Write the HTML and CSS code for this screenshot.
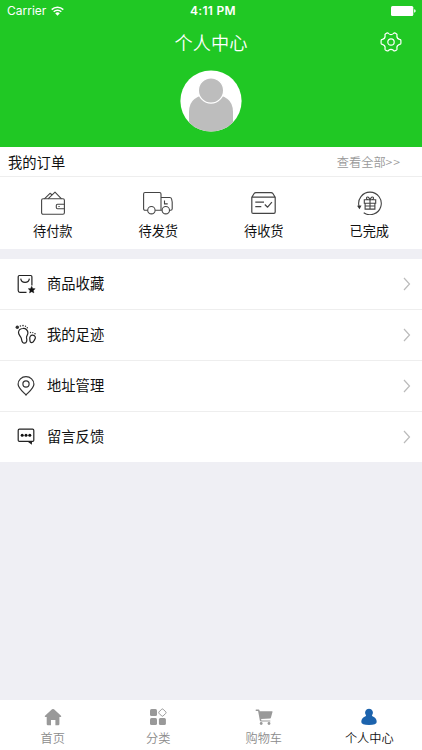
FILE: index.html
```html
<!DOCTYPE html>
<html lang="zh-CN">
<head>
<meta charset="utf-8">
<title>个人中心</title>
<link rel="stylesheet" href="styles.css">
</head>
<body>
<div class="app">
  <header class="header">
    <div class="status">
      <div class="carrier"><span>Carrier</span>
        <svg class="wifi" width="13" height="10" viewBox="0 0 13 10"><g fill="none" stroke="#fff" stroke-width="1.5"><path d="M.7 3.6a8.3 8.3 0 0 1 11.6 0"/><path d="M2.7 5.8a5.5 5.5 0 0 1 7.6 0"/></g><path d="M4.2 7.3a3.4 3.4 0 0 1 4.6 0L6.5 9.7z" fill="#fff"/></svg>
      </div>
      <span class="time">4:11 PM</span>
      <svg class="battery" width="25" height="10" viewBox="0 0 25 10" fill="#fff"><rect width="22.3" height="10" rx="1.5"/><path d="M23.1 3.3q1.6.3 1.6 1.7t-1.6 1.7z"/></svg>
    </div>
    <div class="nav">
      <h1>个人中心</h1>
      <svg class="gear" width="22" height="20" viewBox="0 0 22 20" fill="none" stroke="#fff" stroke-width="1.2" stroke-linejoin="round"><path d="M8.6 1.6Q11 3.6 13.4 1.6Q14.2.6 15.2 1.1L16.6 2Q17.3 2.5 16.9 3.6Q16.6 6.6 19.6 7.4Q20.9 7.6 20.9 8.6V11.2Q20.9 12.2 19.6 12.4Q16.6 13.4 16.9 16.3Q17.3 17.4 16.6 17.9L15.2 18.8Q14.2 19.3 13.4 18.3Q11 16.3 8.6 18.3Q7.8 19.3 6.8 18.8L5.4 17.9Q4.7 17.4 5.1 16.3Q5.4 13.4 2.4 12.4Q1.1 12.2 1.1 11.2V8.6Q1.1 7.6 2.4 7.4Q5.4 6.6 5.1 3.6Q4.7 2.5 5.4 2L6.8 1.1Q7.8.6 8.6 1.6Z"/><circle cx="11" cy="10" r="3.2"/></svg>
    </div>
    <svg class="avatar" width="62" height="62" viewBox="0 0 62 62"><defs><clipPath id="disc"><circle cx="31" cy="31" r="30.6"/></clipPath></defs><circle cx="31" cy="31" r="30.6" fill="#fff"/><g clip-path="url(#disc)"><path d="M9 62V42Q9 24.500 31 24.500T53 42V62z" fill="#bdbdbd"/><circle cx="31" cy="20.500" r="12.600" fill="#bdbdbd" stroke="#fff" stroke-width="1.200"/></g></svg>
  </header>

  <section class="orders">
    <div class="orders-head"><h2>我的订单</h2><a>查看全部<span class="more">&gt;&gt;</span></a></div>
    <div class="order-grid">
      <div class="order">
        <svg width="24" height="24" viewBox="0 0 24 24" fill="none" stroke="#444" stroke-width="1.1" stroke-linejoin="round"><rect x=".6" y="7.8" width="22.8" height="15.400" rx="1.500"/><path d="M3.400 7.800L9 2.300l2 1.500M7 7.800L14 1.200l6.500 6.600M23.400 13.200h-6.900q-1.200 0-1.200 1.200v2.200q0 1.200 1.200 1.200h6.900M17.400 15.500h1.300"/></svg>
        <span>待付款</span>
      </div>
      <div class="order">
        <svg width="30" height="24" viewBox="0 0 30 24" fill="none" stroke="#444" stroke-width="1.100" stroke-linejoin="round"><path d="M4.600 19.200H2Q.600 19.200.600 17.800V3Q.600 1.500 2 1.500h14.500q1.500 0 1.500 1.500v16.200h-5.800M18 6.500h8.700q1.600 0 1.900 1.500l.6 3v6.700q0 1.500-1.500 1.500h-1.100M21.500 9.500v3.400h3.200M18 19.200h.900"/><circle cx="8.400" cy="19.200" r="3.700"/><circle cx="22.800" cy="19.200" r="3.700"/></svg>
        <span>待发货</span>
      </div>
      <div class="order">
        <svg width="25" height="24" viewBox="0 0 25 24" fill="none" stroke="#444" stroke-width="1.200" stroke-linejoin="round"><path d="M.800 6.200L3.300 2.300Q3.800 1.600 4.800 1.600h15.400q1 0 1.500.700l2.500 3.900M.800 6.200h23.400v14.900q0 1.300-1.300 1.300H2.100q-1.300 0-1.300-1.300zM4.300 11.200h8.700M4.300 15.700h6M13.800 13.500l2.800 2.700 4.300-5"/></svg>
        <span>待收货</span>
      </div>
      <div class="order">
        <svg width="25" height="24" viewBox="0 0 25 24" fill="none" stroke="#444" stroke-width="1.100"><path d="M2.100 15.500A11.300 11.300 0 1 1 6.700 21.800"/><path d="M.100 14.700l4.400-.300-2 3.900z" fill="#333" stroke="none"/><path d="M7.300 8.800h11.400v3.400H7.300zM8.100 12.200v5.900h9.800v-5.900M13 8.800v9.300M13 8.800Q8.600 8.600 9.600 6.600C10.500 5 12.300 6.700 13 8.800ZM13 8.800Q17.400 8.600 16.400 6.600C15.500 5 13.700 6.700 13 8.800ZM8 15h10"/></svg>
        <span>已完成</span>
      </div>
    </div>
  </section>

  <section class="menu">
    <div class="row">
      <svg class="icon" width="22" height="22" viewBox="0 0 22 22" fill="none" stroke="#222" stroke-width="1.200"><path d="M11.500 19.400H5q-1.800 0-1.800-1.800V3.700Q3.200 2.500 4.400 2.500h11.300q1.200 0 1.200 1.200v8.800M5.700 5.700a4.400 4.400 0 0 0 8.700 0"/><path d="M16.700 13.200l1 2.200 2.500.300-1.800 1.700.500 2.500-2.200-1.200-2.200 1.200.500-2.500-1.800-1.700 2.500-.300z" fill="#111" stroke="#111" stroke-width=".4"/></svg>
      <span>商品收藏</span>
      <svg class="chev" width="8" height="14" viewBox="0 0 8 14"><path d="M1 1l5.500 6L1 13"/></svg>
    </div>
    <div class="row">
      <svg class="icon" width="22" height="22" viewBox="0 0 22 22" fill="none" stroke="#222" stroke-width="1.200"><path d="M7.900 4.500C10.800 4.200 13.200 6.500 12.900 9.300 12.700 11 11.300 12.200 11.500 13.900 12.200 16 11.900 19.200 9.400 19.200 6.900 19.200 6.800 16.700 6.400 14.600 6 12.600 3.400 11 3.500 8.600 3.600 6.300 5.400 4.700 7.900 4.500ZM17.800 11.200C20.800 11.600 20.700 14 19.800 15.300 18.900 16.600 18.900 18.600 16.800 18.600 14.400 18.600 15.100 16.500 14.800 15 14.500 13.100 15.500 10.900 17.800 11.200Z"/><g fill="#333" stroke="none"><circle cx="2.300" cy="3.300" r="1.700"/><circle cx="5.400" cy="2" r=".8"/><circle cx="8" cy="1.600" r=".8"/><circle cx="10.500" cy="2.200" r=".7"/><circle cx="12.300" cy="3.700" r=".7"/><circle cx="15.500" cy="8.500" r=".7"/><circle cx="17.800" cy="8.600" r=".7"/><circle cx="20" cy="9.700" r=".8"/></g></svg>
      <span>我的足迹</span>
      <svg class="chev" width="8" height="14" viewBox="0 0 8 14"><path d="M1 1l5.500 6L1 13"/></svg>
    </div>
    <div class="row">
      <svg class="icon" width="22" height="22" viewBox="0 0 22 22" fill="none" stroke="#333" stroke-width="1.200"><path d="M11 20C8.500 17.300 3.100 13 3.100 9.200a7.900 7.600 0 0 1 15.800 0C18.900 13 13.500 17.300 11 20Z"/><circle cx="11" cy="9" r="3.100"/></svg>
      <span>地址管理</span>
      <svg class="chev" width="8" height="14" viewBox="0 0 8 14"><path d="M1 1l5.500 6L1 13"/></svg>
    </div>
    <div class="row">
      <svg class="icon" width="22" height="22" viewBox="0 0 22 22" fill="none" stroke="#222" stroke-width="1.200"><rect x="3.200" y="3.200" width="15.600" height="12.200" rx="1.200"/><path d="M13.500 15.500h2.800v2z" fill="#222"/><g fill="#111" stroke="none"><circle cx="7.200" cy="9.200" r="1.500"/><circle cx="11" cy="9.200" r="1.500"/><circle cx="14.800" cy="9.200" r="1.500"/></g></svg>
      <span>留言反馈</span>
      <svg class="chev" width="8" height="14" viewBox="0 0 8 14"><path d="M1 1l5.500 6L1 13"/></svg>
    </div>
  </section>

  <nav class="tabs">
    <div class="tab">
      <svg width="18" height="18" viewBox="0 0 18 18" fill="#999"><path d="M8 1.300q1-.8 2 0l7 6.500q.8 1.200-.5 1.300H15.400V16q0 1.200-1.200 1.200H11.400V12H7v5.200H3.900Q2.700 17.200 2.700 16V9.100H1.500Q.2 9 1 7.800z"/></svg>
      <span>首页</span>
    </div>
    <div class="tab">
      <svg width="18" height="18" viewBox="0 0 18 18" fill="#999"><rect x="1" y="1" width="7" height="7" rx="1.500"/><rect x="1" y="9.900" width="7" height="7" rx="1.500"/><rect x="9.900" y="9.900" width="7" height="7" rx="1.500"/><path d="M12.700 1.200q.7-.6 1.400 0l2.700 2.700q.6.700 0 1.400l-2.700 2.700q-.7.600-1.400 0L10 5.300q-.6-.7 0-1.400z" fill="none" stroke="#999"/></svg>
      <span>分类</span>
    </div>
    <div class="tab">
      <svg width="18" height="18" viewBox="0 0 18 18" fill="#999"><path d="M.9 1.500h2.700q.7 0 .9.700l.2 1.100h12.400q.6 0 .4.700l-1.600 5.700q-.2.600-.8.700l-9 .7.300 1.400h8.900v1.100H5.900q-.8 0-1-.8L3.100 2.900H.9q-.6-.7 0-1.400z"/><circle cx="6.200" cy="15.500" r="1.400"/><circle cx="14" cy="15.500" r="1.400"/></svg>
      <span>购物车</span>
    </div>
    <div class="tab active">
      <svg width="18" height="18" viewBox="0 0 18 18" fill="#1c63ad"><path d="M9 .7A4 4 0 0 1 12.100 7.200Q11.600 7.900 12.500 8.200 16.700 9.700 16.700 14 16.700 17 9 17T1.300 14Q1.300 9.700 5.500 8.200 6.400 7.900 5.900 7.200A4 4 0 0 1 9 .7Z"/></svg>
      <span>个人中心</span>
    </div>
  </nav>
</div>
</body>
</html>
```
FILE: styles.css
```css
* { box-sizing: border-box; }
body {
  margin: 0;
  font-family: "Noto Sans CJK SC", sans-serif;
  color: #111;
}
svg { display: block; flex: none; }
h1, h2 { margin: 0; font-weight: 400; }
.app {
  display: flex;
  flex-direction: column;
  width: 422px;
  height: 750px;
  overflow: hidden;
  background: #efeff4;
}
.header {
  flex: none;
  height: 147px;
  background: #20c824;
  color: #fff;
}
.status {
  display: grid;
  grid-template-columns: 1fr auto 1fr;
  align-items: center;
  height: 22px;
  padding: 0 6px 0 7px;
  font-family: Inter, sans-serif;
  font-size: 12px;
  line-height: 22px;
}
.carrier { display: flex; align-items: center; gap: 5px; }
.time { font-weight: 600; letter-spacing: .3px; padding-left: 3px; }
.battery { justify-self: end; }
.nav {
  display: grid;
  grid-template-columns: 1fr auto 1fr;
  align-items: center;
  height: 41px;
  padding: 0 20px;
}
.nav h1 { grid-column: 2; font-size: 18.200px; line-height: 41px; font-weight: 350; }
.gear { justify-self: end; margin-top: -1px; }
.avatar { margin: 7px auto 0; }
.orders { flex: none; height: 102px; background: #fff; }
.orders-head {
  display: flex;
  justify-content: space-between;
  align-items: center;
  height: 30px;
  padding: 0 21px 0 8px;
  border-bottom: 1px solid #eee;
}
.orders-head h2 { font-size: 14.300px; line-height: 29px; }
.orders-head a { font-size: 12.200px; color: #999; font-weight: 350; }
.more { letter-spacing: 1px; }
.order-grid { display: grid; grid-template-columns: repeat(4, 1fr); }
.order {
  display: flex;
  flex-direction: column;
  align-items: center;
  padding-top: 14px;
  gap: 6px;
  font-size: 13.200px;
  line-height: 20px;
}
.menu { flex: none; margin-top: 10px; background: #fff; }
.row {
  display: flex;
  align-items: center;
  height: 51px;
  padding: 0 11px 0 15px;
  border-bottom: 1px solid #eee;
  font-size: 14.300px;
  line-height: 20px;
}
.row:last-child { height: 50px; border-bottom: 0; }
.row span { margin-left: 10px; padding-bottom: 2px; }
.chev { margin-left: auto; fill: none; stroke: #bbb; stroke-width: 1.200; }
.tabs {
  display: grid;
  grid-template-columns: repeat(4, 1fr);
  height: 50px;
  margin-top: auto;
  background: #fff;
}
.tab {
  display: flex;
  flex-direction: column;
  align-items: center;
  padding-top: 8px;
  gap: 3px;
  font-size: 12.200px;
  line-height: 18px;
  font-weight: 350;
  color: #8c8c8c;
}
.tab.active { color: #111; }
```
